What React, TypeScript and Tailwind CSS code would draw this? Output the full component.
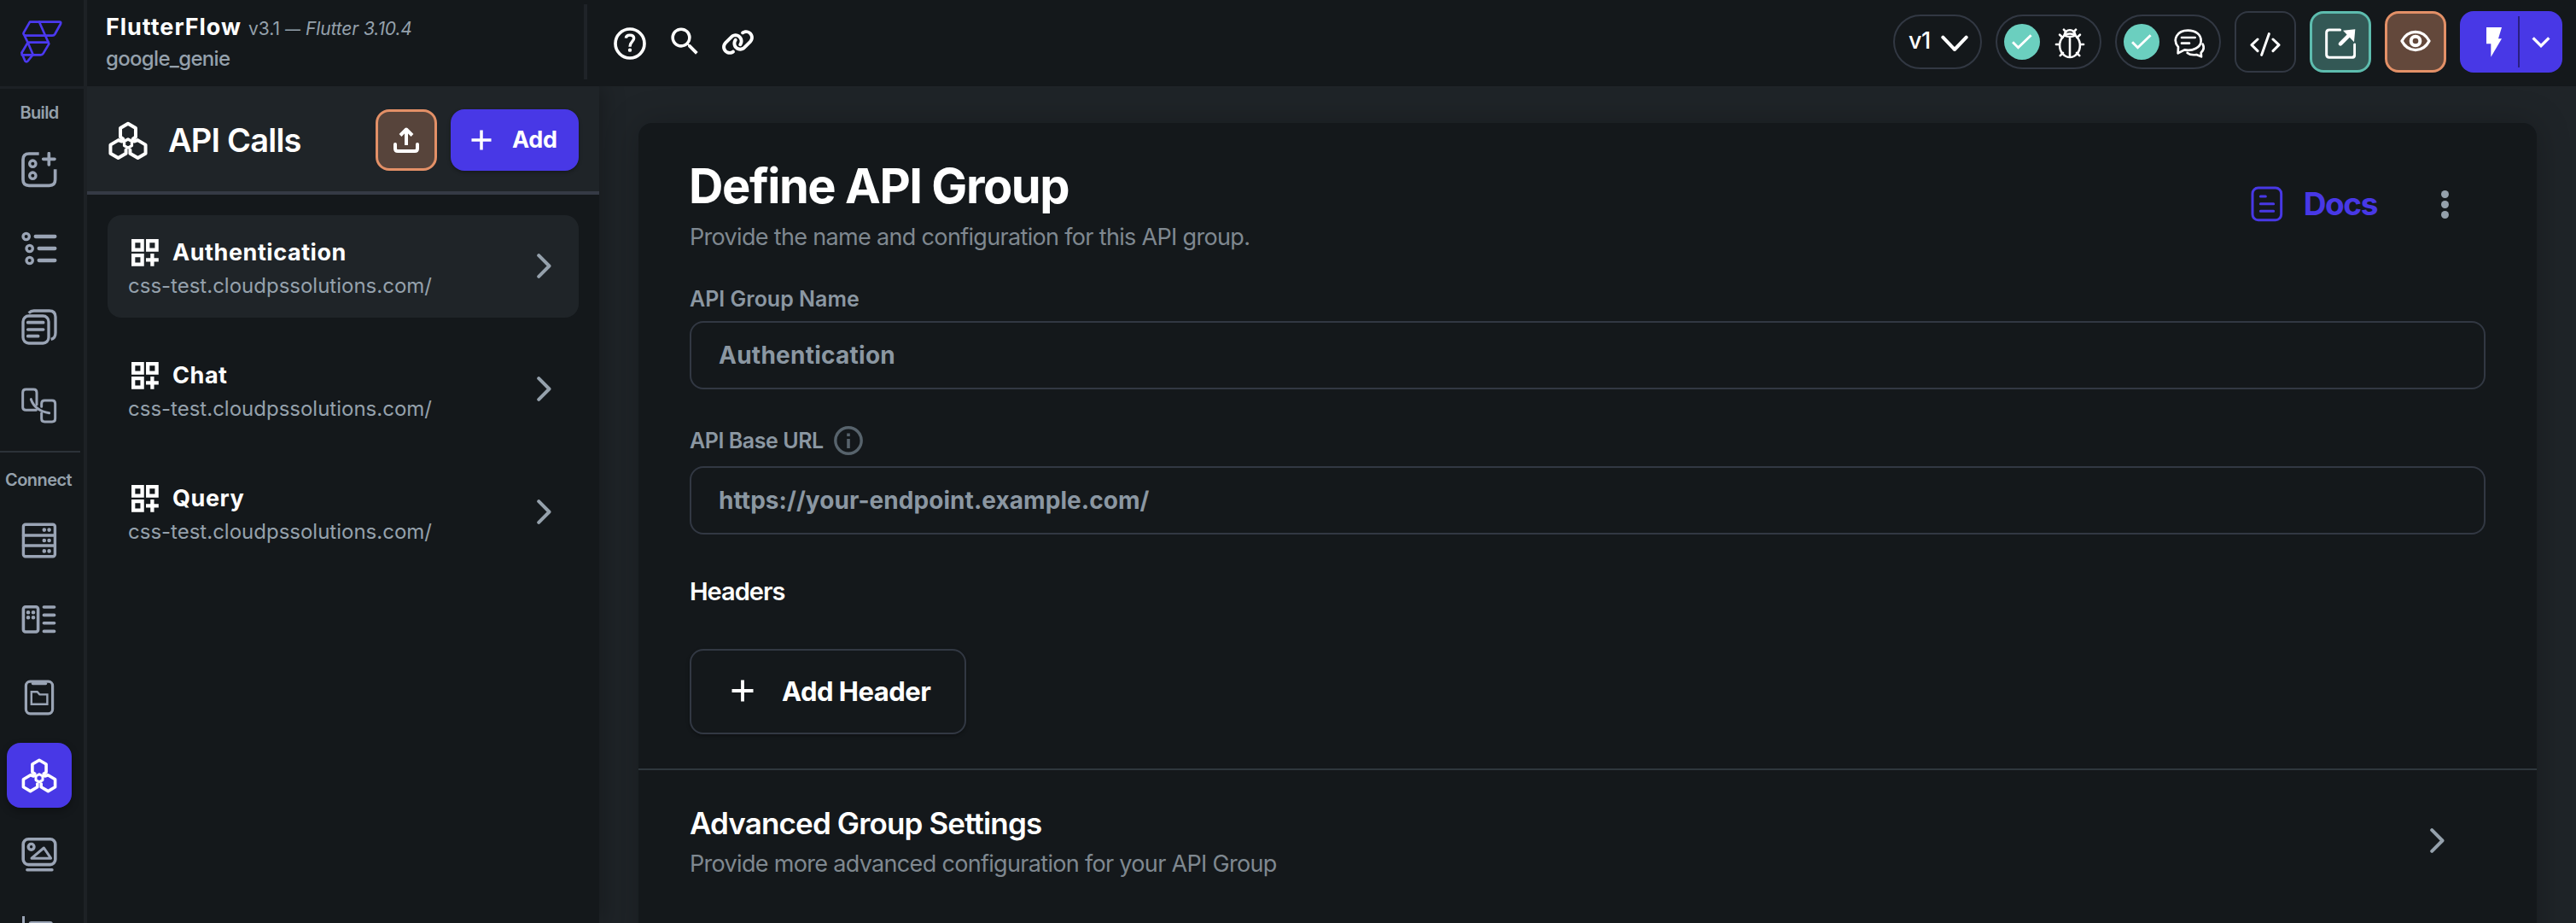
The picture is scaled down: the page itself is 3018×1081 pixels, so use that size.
import React from "react";
import { FaLink } from "react-icons/fa6";
import { MdSearch } from "react-icons/md";

const stroke = {
  fill: "none",
  stroke: "currentColor",
  strokeLinecap: "round" as const,
  strokeLinejoin: "round" as const,
};

function Logo() {
  return (
    <svg className="h-[90px] w-[80px] text-[#4b39ef]" viewBox="0 0 240 270" {...stroke} strokeWidth={8}>
      <path d="M75 47H179Q186 47 183 54L163 90Q160 95 154 95H60Q50 92 53 85Z" />
      <path d="M108 47L142 124L122 158Q119 163 113 163H47" />
      <path d="M56 95L68 120L86 162L68 184Q63 190 58 184L46 156L68 119H140" />
    </svg>
  );
}

function HexIcon({ className, width = 3.6 }: { className: string; width?: number }) {
  return (
    <svg className={className} viewBox="0 0 41.6 41" {...stroke} strokeWidth={width}>
      <path d="M15.6 18.3L12.7 16.4V7L20.8 2.2L28.9 7V16.4L26 18.3" />
      <path d="M14.2 21L10.6 19.7L2.2 24.7V33.8L10.4 38.6L18.6 33.8V30" />
      <path d="M27.4 21L31 19.7L39.4 24.7V33.8L31.2 38.6L23 33.8V30" />
      <path strokeWidth={3} d="M20.8 18.7L24.8 21V25.6L20.8 27.9L16.8 25.6V21Z" />
    </svg>
  );
}

function Plus({ className }: { className: string }) {
  return (
    <svg className={className} viewBox="0 0 26 26" fill="none" stroke="currentColor" strokeWidth={3.8}>
      <path d="M13 0.5V25.5M0.5 13H25.5" />
    </svg>
  );
}

function ChevronRight({ className }: { className: string }) {
  return (
    <svg className={className} viewBox="0 0 17 29" {...stroke} strokeWidth={4}>
      <path d="M2.2 2.2L14.5 14.5L2.2 26.8" />
    </svg>
  );
}

const railIcon = "h-[42px] w-[42px]";

const buildIcons = [
  <svg className={railIcon} viewBox="76 236 126 126" {...stroke} strokeWidth={11}>
    <path strokeLinecap="butt" d="M138 242H103Q82 242 82 263V333Q82 354 103 354H174Q195 354 195 333V297" />
    <circle cx="116" cy="277" r="11" strokeWidth={10} />
    <circle cx="116" cy="319" r="11" strokeWidth={10} />
    <path d="M173 241V281M153 261H193" />
  </svg>,
  <svg className={railIcon} viewBox="76 511 126 126" {...stroke} strokeWidth={13}>
    <circle cx="93" cy="532" r="11" strokeWidth={10} />
    <circle cx="105" cy="574" r="11" strokeWidth={10} />
    <circle cx="105" cy="616" r="11" strokeWidth={10} />
    <path d="M126 532H194M138 574H194M138 616H194" />
  </svg>,
  <svg className={railIcon} viewBox="78 787 126 126" {...stroke} strokeWidth={10}>
    <rect x="84" y="811" width="90" height="96" rx="20" />
    <path strokeLinecap="butt" d="M104 801Q112 793 122 793H176Q198 793 198 815V870Q198 890 182 893" />
    <path strokeWidth={11} d="M101 834H155M101 859H155M101 882H137" />
  </svg>,
  <svg className={railIcon} viewBox="76 1063 126 126" {...stroke} strokeWidth={9}>
    <path d="M128 1142H92Q81 1142 81 1132V1080Q81 1069 92 1069H119Q130 1069 130 1080V1122" />
    <path d="M147 1130V1119Q147 1108 158 1108H184Q195 1108 195 1119V1172Q195 1183 184 1183H158Q147 1183 147 1172V1152" />
    <path d="M110 1104Q124 1144 174 1152" />
  </svg>,
];

const connectIcons = [
  <svg className={railIcon} viewBox="0 0 42 42" {...stroke} strokeWidth={3.4}>
    <rect x="2.4" y="2.2" width="37" height="37.6" rx="2.5" />
    <path d="M2.4 15H39.4M2.4 27H39.4" />
    <path strokeWidth={4.6} d="M26.8 8.6h.01M32.6 8.6h.01M26.8 21h.01M32.6 21h.01M26.8 33.4h.01M32.6 33.4h.01" />
  </svg>,
  <svg className={railIcon} viewBox="0 0 42 42" {...stroke} strokeWidth={3.6}>
    <rect x="2.4" y="6.8" width="17.2" height="29.2" rx="2.5" />
    <path d="M26.4 7H38.6M26.4 16.4H38.6M26.4 25.8H38.6M26.4 35.4H38.6" />
    <path strokeWidth={4.6} d="M8 13.2h.01M14 13.2h.01M8 19.2h.01M14 19.2h.01" />
  </svg>,
  <svg className={railIcon} viewBox="0 0 42 42" {...stroke} strokeWidth={3.2}>
    <rect x="5.4" y="2.2" width="31.2" height="37.6" rx="5" />
    <path d="M13.4 4.6H28.6" />
    <path strokeWidth={2.4} strokeLinejoin="miter" d="M11.8 14.2H18.6L21.4 17.4H30.4V28.8H11.8Z" />
  </svg>,
  <HexIcon className="h-[41px] w-[42px]" />,
  <svg className={railIcon} viewBox="0 0 42 42" {...stroke} strokeWidth={3.6}>
    <rect x="2.2" y="2.8" width="37.6" height="29.8" rx="6" />
    <circle cx="11.6" cy="11.8" r="3.4" strokeWidth={3.4} />
    <path strokeWidth={3} d="M12 25.2L26.4 13L34.6 25.2Z" />
    <path strokeWidth={3.4} d="M6.8 38.8H36" />
  </svg>,
  <svg className={railIcon} viewBox="0 0 42 42" {...stroke} strokeWidth={3}>
    <path strokeLinecap="butt" d="M2.5 1V40" />
    <rect x="10" y="8.6" width="25.5" height="8" rx="1.5" />
    <rect x="10" y="24" width="18" height="8" rx="1.5" />
  </svg>,
];

function Rail() {
  return (
    <aside className="flex w-[102px] shrink-0 flex-col border-r-4 border-[#1d2125] bg-[#14181b] text-[#9aa4b5]">
      <div className="h-[104px] shrink-0 border-b-3 border-[#1d2125] pt-[10px] pl-[10px]">
        <Logo />
      </div>
      <div className="mt-4 mb-[9px] w-[92px] shrink-0 text-center text-[20px] leading-6 font-semibold tracking-[-0.65px] text-[#95a1ac]">
        Build
      </div>
      {buildIcons.map((icon, i) => (
        <div key={i} className="flex h-[92px] w-[92px] shrink-0 items-center justify-center">
          {icon}
        </div>
      ))}
      <div className="mt-[7px] h-[2px] w-[94px] shrink-0 bg-[#2c3238]" />
      <div className="mt-5 mb-[13px] w-[92px] shrink-0 pr-[2px] text-center text-[20px] leading-6 font-semibold tracking-[-0.56px] text-[#95a1ac]">
        Connect
      </div>
      {connectIcons.map((icon, i) => (
        <div key={i} className="flex h-[92px] w-[92px] shrink-0 items-center justify-center">
          {i === 3 ? (
            <div className="mb-[2px] flex h-[76px] w-[76px] items-center justify-center rounded-[16px] bg-[#4838e6] text-white shadow-[0_4px_10px_rgba(0,0,0,0.3)]">
              {icon}
            </div>
          ) : (
            icon
          )}
        </div>
      ))}
    </aside>
  );
}

function StatusPill({ children }: { children: React.ReactNode }) {
  return (
    <div className="flex h-16 w-[124px] items-center justify-between rounded-full border-2 border-[#323843] pr-[17px] pl-2">
      <div className="flex h-[42px] w-[42px] items-center justify-center rounded-full bg-[#6bcfbf]">
        <svg className="h-[18px] w-6" viewBox="471 119 74 56" fill="none" stroke="white" strokeWidth={9}>
          <path d="M474 148L494 168L541 123" />
        </svg>
      </div>
      {children}
    </div>
  );
}

function TopBar() {
  return (
    <header className="flex h-[101px] shrink-0 items-start bg-[#14181b] pr-4 text-white">
      <div className="w-[582px] shrink-0 pt-[16px] pl-[22px]">
        <div className="flex h-8 items-baseline text-[#95a1ac]">
          <span className="text-[27px] leading-8 font-bold tracking-[0.96px] text-white">FlutterFlow</span>
          <span className="ml-2 text-[21px] leading-8">v3.1</span>
          <span className="ml-[6px] w-6 text-[18px] leading-8">—</span>
          <span className="text-[21px] leading-8 tracking-[-0.12px] italic">Flutter 3.10.4</span>
        </div>
        <div className="mt-[6px] text-[24px] leading-[30px] font-medium tracking-[-0.68px] text-[#95a1ac]">
          google_genie
        </div>
      </div>
      <div className="mt-[5px] h-[88px] w-1 shrink-0 bg-[#1f2328]" />
      <div className="flex h-[101px] items-center">
        <svg className="ml-[31px] h-[38px] w-[38px]" viewBox="87 93 114 114" {...stroke} strokeWidth={11}>
          <circle cx="144" cy="150" r="51" />
          <path strokeWidth={10} strokeLinecap="butt" d="M130 131C131 117 157 117 158 131C158 143 144 143 144 161" />
          <circle cx="144" cy="173" r="6.5" fill="currentColor" stroke="none" />
        </svg>
        <MdSearch className="mt-[-4px] ml-[24px] h-[43px] w-[43px]" />
        <FaLink className="mt-[-3px] ml-[21px] h-[39px] w-[39px]" />
      </div>

      <div className="ml-auto flex h-[98px] items-center gap-4">
        <div className="flex h-16 w-[104px] items-center rounded-full border-2 border-[#323843] pl-[16px]">
          <span className="mb-[2px] w-[38px] text-[27px] leading-8 font-medium tracking-[-0.52px]">v1</span>
          <svg className="mt-[4px] h-5 w-8" viewBox="222 121 96 60" {...stroke} strokeWidth={12}>
            <path d="M229 129L270 172L311 129" />
          </svg>
        </div>
        <StatusPill>
          <svg className="mt-1 h-9 w-9" viewBox="621 97 108 112" {...stroke} strokeWidth={8}>
            <ellipse cx="675" cy="160" rx="37" ry="43" />
            <path d="M655 123C657 98 693 98 695 123" />
            <path d="M655 124Q675 132 695 124M675 130V202" />
            <path d="M653 102L661 111M697 102L689 111M638 121L649 131M712 121L701 131M625 156H637M713 156H725M640 197L650 187M710 197L700 187" />
          </svg>
        </StatusPill>
        <StatusPill>
          <svg className="mt-1 h-9 w-9" viewBox="1041 98 108 108" {...stroke} strokeWidth={8}>
            <path d="M1055 186L1056 164C1034 138 1052 106 1090 106C1118 106 1136 121 1136 142C1136 166 1106 180 1078 174Z" />
            <path d="M1142 154C1149 168 1143 178 1136 184L1137 198L1120 191C1105 193 1094 190 1088 185" />
            <path d="M1068 131H1115M1068 151H1095" />
          </svg>
        </StatusPill>
        <div className="flex h-[72px] w-[72px] items-center justify-center rounded-[16px] border-2 border-[#323843]">
          <svg className="mt-[6px] h-[30px] w-9" viewBox="108 107 108 90" {...stroke} strokeWidth={9}>
            <path d="M135 134L114 154L135 175M175 115L149 189M189 134L210 154L189 175" />
          </svg>
        </div>
        <div className="flex h-[72px] w-[72px] items-center justify-center rounded-[16px] border-3 border-[#5dbcae] bg-[#335855]">
          <svg className="mt-1 h-9 w-9" viewBox="371 97 108 108" {...stroke} strokeWidth={9}>
            <path d="M424 103H386Q376 103 376 113V190Q376 200 386 200H465Q475 200 475 190V154" />
            <path strokeWidth={14} d="M425 152L458 119" />
            <path fill="currentColor" stroke="none" d="M434 105L477 101L473 146Z" />
          </svg>
        </div>
        <div className="flex h-[72px] w-[72px] items-center justify-center rounded-[16px] border-3 border-[#e39067] bg-[#63483b]">
          <svg className="mb-[2px] h-9 w-9" viewBox="636 90 108 108" {...stroke} strokeWidth={10}>
            <path d="M642 144Q658 113 690 112Q722 113 738 144Q722 175 690 176Q658 175 642 144Z" />
            <circle cx="690" cy="144" r="16" strokeWidth={12} />
          </svg>
        </div>
        <div className="flex h-[72px] w-[120px] items-center rounded-[16px] bg-[#4838e6]">
          <svg className="ml-[31px] h-[35px] w-[18px]" viewBox="939 95 54 105" fill="currentColor">
            <path d="M939 95H993L981 135H993L955 199V153H939Z" />
          </svg>
          <div className="ml-[19px] h-[60px] w-[2px] bg-[#2a2080]" />
          <svg className="ml-[14px] h-[14px] w-[22px]" viewBox="1098 124 66 42" fill="none" stroke="currentColor" strokeWidth={10}>
            <path d="M1103 131L1131 159L1159 131" />
          </svg>
        </div>
      </div>
    </header>
  );
}

const calls = [
  { name: "Authentication", active: true },
  { name: "Chat", active: false },
  { name: "Query", active: false },
];

function CallsPanel() {
  return (
    <section className="z-10 flex w-[600px] shrink-0 flex-col bg-[#14181b] text-white shadow-[4px_0_24px_rgba(0,0,0,0.28)]">
      <div className="flex h-[127px] shrink-0 items-center border-b-4 border-[#353a45] bg-[#1f2428] pt-[3px] pr-6 pl-[25px]">
        <HexIcon className="mt-[2px] h-[46px] w-[46px]" width={3.6} />
        <h2 className="ml-[24px] text-[38px] leading-[46px] font-semibold tracking-[-0.8px]">API Calls</h2>
        <div className="ml-auto flex h-[72px] w-[72px] items-center justify-center rounded-[16px] border-3 border-[#e39067] bg-[#57443b]">
          <svg className="h-[32px] w-[32px]" viewBox="0 0 32 32" {...stroke} strokeWidth={4}>
            <path d="M3 21V26Q3 29 6 29H26Q29 29 29 26V21" />
            <path strokeLinecap="butt" d="M16 22V4M9 10.5L16 3.5L23 10.5" />
          </svg>
        </div>
        <div className="ml-4 flex h-[72px] w-[150px] items-center rounded-[16px] bg-[#4838e6] pl-6 shadow-[0_2px_4px_rgba(0,0,0,0.3)]">
          <Plus className="h-6 w-6" />
          <span className="ml-6 text-[27px] leading-8 font-bold tracking-[-0.28px]">Add</span>
        </div>
      </div>
      <ul className="flex flex-col gap-6 p-6">
        {calls.map((call) => (
          <li
            key={call.name}
            className={`flex h-[120px] items-start justify-between rounded-[16px] pt-7 pr-8 pl-6 ${call.active ? "bg-[#1f2428]" : ""}`}
          >
            <div>
              <div className="ml-1 flex h-8 items-center">
                <svg className="h-8 w-8" viewBox="0 0 32 32" fill="none" stroke="currentColor" strokeWidth={4.3}>
                  <path d="M2.2 2.2H12.6V12.6H2.2ZM19.2 2.2H29.6V12.6H19.2ZM2.2 19.2H12.6V29.6H2.2ZM24.4 17V31.8M17 24.4H31.8" />
                </svg>
                <span className="ml-[16px] text-[27px] leading-8 font-bold tracking-[0.55px]">{call.name}</span>
              </div>
              <div className="mt-[8px] text-[24px] leading-[30px] text-[#95a1ac]">css-test.cloudpssolutions.com/</div>
            </div>
            <ChevronRight className="mt-[17px] h-[29px] w-[17px] text-[#95a1ac]" />
          </li>
        ))}
      </ul>
    </section>
  );
}

function GroupForm() {
  return (
    <main className="flex min-w-0 flex-1 bg-[#1f2428] pt-[43px] pr-[46px] pl-[46px]">
      <div className="h-[1000px] flex-1 rounded-[16px] bg-[#14181b] pt-[42px] shadow-[0_0_40px_rgba(0,0,0,0.22)]">
        <div className="px-[60px]">
          <div className="flex items-start justify-between">
            <div className="text-white">
              <h1 className="-ml-px text-[56px] leading-[64px] font-bold tracking-[-1.45px]">Define API Group</h1>
              <p className="mt-[12px] text-[27px] leading-8 tracking-[-0.67px] text-[#7f8890]">
                Provide the name and configuration for this API group.
              </p>
            </div>
            <div className="mt-[29px] mr-[43px] flex h-12 items-center text-[#4838e6]">
              <svg className="h-[42px] w-[38px]" viewBox="111 658 114 126" {...stroke} strokeWidth={9}>
                <rect x="117" y="664" width="101" height="113" rx="20" />
                <path d="M145 694H163M145 720H191M145 746H191" />
              </svg>
              <span className="ml-[24px] text-[37px] leading-[44px] font-bold tracking-[-1.39px]">Docs</span>
              <div className="ml-[75px] flex flex-col gap-[3px]">
                <span className="h-[9px] w-[9px] rounded-full bg-[#95a1ac]" />
                <span className="h-[9px] w-[9px] rounded-full bg-[#95a1ac]" />
                <span className="h-[9px] w-[9px] rounded-full bg-[#95a1ac]" />
              </div>
            </div>
          </div>

          <div className="mt-[41px] text-[25px] leading-[30px] font-semibold text-[#8b97a2]">API Group Name</div>
          <div className="mt-[11px] flex h-20 items-center rounded-[16px] border-2 border-[#323843] pl-8 text-[28px] leading-8 font-bold tracking-[0.25px] text-[#8b97a2]">
            Authentication
          </div>

          <div className="mt-[43px] flex h-[34px] items-center text-[#8b97a2]">
            <span className="text-[25px] leading-[34px] font-semibold tracking-[-0.44px]">API Base URL</span>
            <svg className="ml-[12px] h-[34px] w-[34px] text-[#57636c]" viewBox="0 0 34 34" fill="none" stroke="currentColor">
              <circle cx="17" cy="17" r="15.2" strokeWidth={3.4} />
              <path strokeWidth={3.6} d="M17 15V26M17 8.5V12" />
            </svg>
          </div>
          <div className="mt-[13px] flex h-20 items-center rounded-[16px] border-2 border-[#323843] pl-[32px] text-[28px] leading-8 font-bold tracking-[0.06px] text-[#8b97a2]">
            https://your-endpoint.example.com/
          </div>

          <h3 className="mt-[49px] text-[29px] leading-9 font-semibold tracking-[-1px] text-white">Headers</h3>
          <button className="mt-[49px] flex h-[100px] w-[324px] items-center rounded-[16px] border-2 border-[#323843] pl-[47px] text-white shadow-[0_2px_4px_rgba(0,0,0,0.3)]">
            <Plus className="mb-[2px] h-[26px] w-[26px]" />
            <span className="ml-[33px] text-[31px] leading-9 font-bold tracking-[-0.5px]">Add Header</span>
          </button>
        </div>

        <div className="mt-10 h-[2px] bg-[#2f373d]" />
        <div className="mt-[41px] flex items-start justify-between px-[60px]">
          <div>
            <h3 className="text-[35px] leading-[42px] font-semibold tracking-[-0.86px] text-white">
              Advanced Group Settings
            </h3>
            <p className="mt-[11px] text-[27px] leading-8 tracking-[-0.68px] text-[#7f8890]">
              Provide more advanced configuration for your API Group
            </p>
          </div>
          <ChevronRight className="mt-[27px] mr-[48px] h-[29px] w-[17px] text-[#95a1ac]" />
        </div>
      </div>
    </main>
  );
}

export default function App() {
  return (
    <div className="flex h-[1081px] w-full overflow-hidden bg-[#14181b] font-['Inter',sans-serif]">
      <Rail />
      <div className="flex min-w-0 flex-1 flex-col">
        <TopBar />
        <div className="flex min-h-0 flex-1 overflow-hidden">
          <CallsPanel />
          <GroupForm />
        </div>
      </div>
    </div>
  );
}
